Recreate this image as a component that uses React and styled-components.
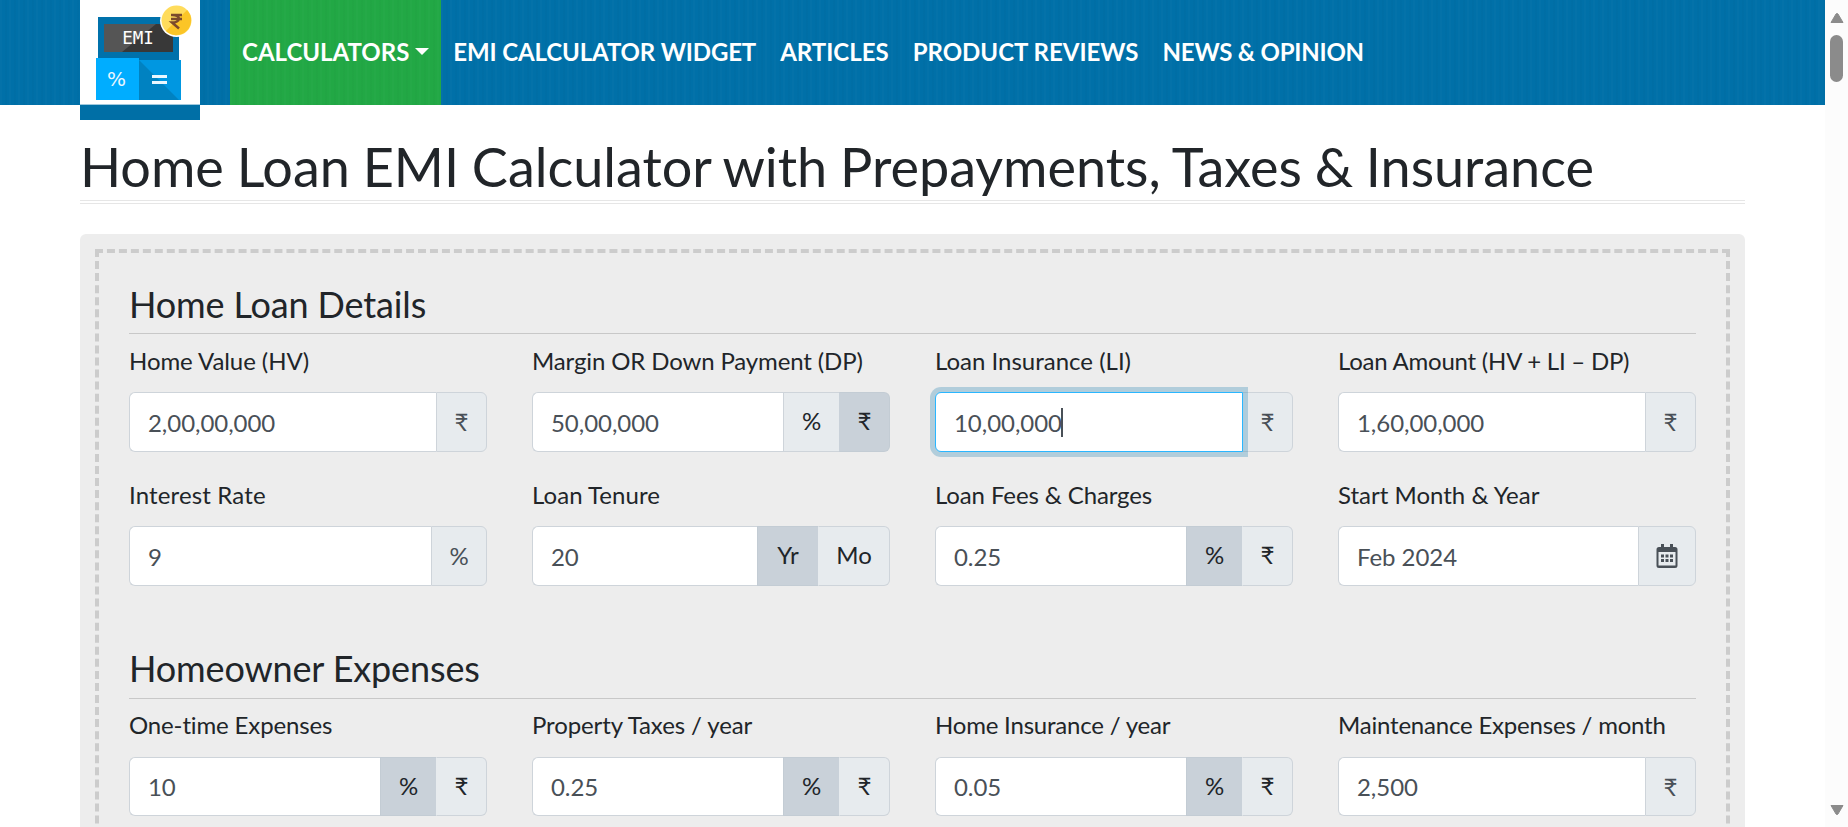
import React from "react";
import styled, { createGlobalStyle, css } from "styled-components";

const GlobalStyle = createGlobalStyle`
  *, *::before, *::after { box-sizing: border-box; }
  html, body { margin: 0; height: 100%; overflow: hidden; background: #fff; }
  body {
    font-family: Lato, "Noto Sans", sans-serif;
    font-size: 24px;
    line-height: 36px;
    font-variant-ligatures: none;
    color: #212529;
  }
`;

const weave = css`
  background-image:
    repeating-linear-gradient(90deg, rgba(255, 255, 255, 0.015) 0 2px, transparent 2px 5px, rgba(0, 0, 0, 0.015) 5px 7px, transparent 7px 9px);
`;

const Screen = styled.div`
  display: flex;
  width: 1848px;
  height: 827px;
  overflow: hidden;
`;

const Page = styled.div`
  flex: 1;
  min-width: 0;
`;

const Header = styled.header`
  display: flex;
  height: 105px;
  padding: 0 80px;
  background-color: #0070a8;
  ${weave}
`;

const Brand = styled.a`
  flex: none;
  width: 120px;
  height: 120px;
  margin-right: 30px;
  background: #fff;
  border-bottom: 15px solid #006fa6;
  svg { display: block; }
`;

const Nav = styled.nav`
  display: flex;
`;

const NavLink = styled.a`
  display: flex;
  align-items: center;
  padding: 0 12px 2px;
  font-weight: 700;
  letter-spacing: ${(p) => p.$track || 0}px;
  color: #fff;
  white-space: nowrap;
  ${(p) => p.$active && css`
    background-color: #22a845;
    ${weave}
  `}
`;

const Caret = styled.span`
  margin-left: 6px;
  border: 7px solid transparent;
  border-top-color: #fff;
  border-bottom: 0;
`;

const Content = styled.main`
  padding: 32px 80px 0;
`;

const Title = styled.h1`
  margin: 0 0 30px;
  height: 67px;
  border-bottom: 4px double #e6e6e6;
  font-size: 54px;
  line-height: 59px;
  font-weight: 400;
  letter-spacing: -0.025px;
  word-spacing: -1px;
  white-space: nowrap;
`;

const Panel = styled.section`
  padding: 15px;
  background: #ededed;
  border-radius: 6px;
`;

const Form = styled.div`
  height: 900px;
  padding: 28px 30px 0;
  border: 4px dashed #ccc;
`;

const Group = styled.div`
  margin-bottom: 60px;
`;

const GroupTitle = styled.h2`
  margin: 0 0 10px;
  height: 53px;
  border-bottom: 1px solid #c8c8c8;
  font-size: 36px;
  line-height: 46px;
  font-weight: 400;
  letter-spacing: -0.14px;
  ${Group}:last-child & { line-height: 44px; }
`;

const Grid = styled.div`
  display: grid;
  grid-template-columns: repeat(4, 358px);
  column-gap: 45px;
  row-gap: 26px;
`;

const Field = styled.div`
  height: 108px;
`;

const Label = styled.label`
  display: block;
  height: 48px;
  line-height: 34px;
  letter-spacing: ${(p) => p.$track || 0}px;
  white-space: nowrap;
  ${Group}:last-child & { line-height: 32px; }
`;

const InputGroup = styled.div`
  display: flex;
  height: 60px;
  ${Group}:last-child & { height: 59px; }
`;

const Value = styled.div`
  flex: 1;
  display: flex;
  align-items: center;
  padding: 1px 18px 0;
  background: #fff;
  border: 1px solid #ced4da;
  border-right: 0;
  border-radius: 6px 0 0 6px;
  color: #495057;
  letter-spacing: -0.05px;
  ${(p) => p.$focused && css`
    position: relative;
    z-index: 1;
    margin-right: -1px;
    border: 1px solid #29b6ff;
    box-shadow: 0 0 0 5px rgba(0, 112, 168, 0.25);
  `}
`;

const TextCursor = styled.span`
  width: 2px;
  height: 29px;
  margin: -1px 0 0 -1px;
  background: #495057;
`;

const Addon = styled.div`
  width: ${(p) => p.$w}px;
  display: flex;
  align-items: center;
  justify-content: center;
  background: ${(p) => (p.$on ? "#c9d1d9" : "#e7ebee")};
  border: 1px solid ${(p) => (p.$on ? "#c3ccd4" : "#ced4da")};
  color: ${(p) => (p.$button ? "#212529" : "#495057")};
  ${(p) => p.$button && css`padding-bottom: 2px;`}
  ${(p) => p.$inner && css`border-left-color: transparent;`}
  &:last-child { border-radius: 0 6px 6px 0; }
  &:not(:last-child) { border-right: 0; }
`;

const Scrollbar = styled.aside`
  width: 23px;
  display: flex;
  flex-direction: column;
  align-items: center;
  padding: 13px 0 12px;
  background: #fcfcfc;
`;

const Thumb = styled.div`
  width: 13px;
  height: 47px;
  margin: 12px 0 auto;
  border-radius: 7px;
  background: #8b8b8b;
`;

const Logo = () => (
  <svg width="120" height="105" viewBox="0 0 120 105">
    <rect x="18" y="17" width="81" height="44" fill="#0071ab" />
    <rect x="24" y="24" width="69" height="28" fill="#555" />
    <path d="M76 24H93V52H42Z" fill="#383838" />
    <text x="58" y="43.500" textAnchor="middle" fontFamily="DejaVu Sans Mono" fontSize="17.500" fill="#fff">EMI</text>
    <rect x="16" y="58" width="43" height="42" fill="#00adff" />
    <rect x="59" y="60" width="42" height="40" fill="#0097e1" />
    <path d="M59 60L99 100H59Z" fill="#0082c1" />
    <text x="36.500" y="86" textAnchor="middle" fontFamily="DejaVu Sans" fontSize="20" fill="#eaf7ff">%</text>
    <path d="M72 76.500H87M72 82.500H87" stroke="#eaf7ff" strokeWidth="3" />
    <circle cx="96.500" cy="20.500" r="16.500" fill="#fff" />
    <circle cx="96.500" cy="20.500" r="15" fill="#ffdc5c" />
    <path d="M107.100 9.900A15 15 0 0 1 85.900 31.100Z" fill="#fbc527" />
    <path d="M91 15H102M91 19H102M92 15Q99 15 99 19Q98 22.500 92 22.500L99 28.500" fill="none" stroke="#7b4a2c" strokeWidth="2.500" />
    <path d="M0 104.500H120" stroke="#9fc9de" strokeWidth="1" />
  </svg>
);

const CalendarIcon = () => (
  <svg width="23" height="24" viewBox="0 0 23 24" fill="#495057">
    <path d="M5 0H8V3H14V0H17V3H19Q21.500 3 21.500 5.500V21.500Q21.500 24 19 24H3Q.5 24 .5 21.500V5.500Q.5 3 3 3H5ZM2.500 8V21.500H19.500V8Z" fillRule="evenodd" />
    <path d="M5 10.500h3v3h-3zM9.500 10.500h3v3h-3zM14 10.500h3v3h-3zM5 15h3v3h-3zM9.500 15h3v3h-3zM14 15h3v3h-3z" />
  </svg>
);

const Arrow = ({ down }) => (
  <svg width="14" height="10" viewBox="0 0 14 10">
    <path d={down ? "M1 .5H13L8 9Q7 10 6 9Z" : "M1 9.500H13L8 1Q7 0 6 1Z"} fill="#8b8b8b" stroke="#8b8b8b" strokeLinejoin="round" />
  </svg>
);

const rupee = { text: "₹", w: 51 };
const percentRupee = (on) => [
  { text: "%", w: 56, button: true, on: on === "%" },
  { text: "₹", w: 51, button: true, on: on === "₹", inner: true },
];

const groups = [
  {
    title: "Home Loan Details",
    fields: [
      { label: "Home Value (HV)", track: -0.06, value: "2,00,00,000", addons: [rupee] },
      { label: "Margin OR Down Payment (DP)", track: -0.13, value: "50,00,000", addons: percentRupee("₹") },
      { label: "Loan Insurance (LI)", value: "10,00,000", addons: [rupee], focused: true },
      { label: "Loan Amount (HV + LI – DP)", track: -0.23, value: "1,60,00,000", addons: [rupee] },
      { label: "Interest Rate", track: 0.14, value: "9", addons: [{ text: "%", w: 56 }] },
      {
        label: "Loan Tenure",
        track: 0.05,
        value: "20",
        addons: [
          { text: "Yr", w: 61, button: true, on: true },
          { text: "Mo", w: 72, button: true, inner: true },
        ],
      },
      { label: "Loan Fees & Charges", track: -0.12, value: "0.25", addons: percentRupee("%") },
      { label: "Start Month & Year", value: "Feb 2024", addons: [{ text: <CalendarIcon />, w: 58 }] },
    ],
  },
  {
    title: "Homeowner Expenses",
    fields: [
      { label: "One-time Expenses", track: -0.14, value: "10", addons: percentRupee("%") },
      { label: "Property Taxes / year", track: -0.11, value: "0.25", addons: percentRupee("%") },
      { label: "Home Insurance / year", track: -0.2, value: "0.05", addons: percentRupee("%") },
      { label: "Maintenance Expenses / month", track: -0.2, value: "2,500", addons: [rupee] },
    ],
  },
];

export default function App() {
  return (
    <Screen>
      <GlobalStyle />
      <Page>
        <Header>
          <Brand><Logo /></Brand>
          <Nav>
            <NavLink $active>CALCULATORS<Caret /></NavLink>
            <NavLink $track={-0.13}>EMI CALCULATOR WIDGET</NavLink>
            <NavLink>ARTICLES</NavLink>
            <NavLink>PRODUCT REVIEWS</NavLink>
            <NavLink $track={-0.22}>NEWS &amp; OPINION</NavLink>
          </Nav>
        </Header>
        <Content>
          <Title>Home Loan EMI Calculator with Prepayments, Taxes &amp; Insurance</Title>
          <Panel>
            <Form>
              {groups.map((g) => (
                <Group key={g.title}>
                  <GroupTitle>{g.title}</GroupTitle>
                  <Grid>
                    {g.fields.map((f) => (
                      <Field key={f.label}>
                        <Label $track={f.track}>{f.label}</Label>
                        <InputGroup>
                          <Value $focused={f.focused}>
                            {f.value}
                            {f.focused && <TextCursor />}
                          </Value>
                          {f.addons.map((a, i) => (
                            <Addon key={i} $w={a.w} $button={a.button} $on={a.on} $inner={a.inner}>
                              {a.text}
                            </Addon>
                          ))}
                        </InputGroup>
                      </Field>
                    ))}
                  </Grid>
                </Group>
              ))}
            </Form>
          </Panel>
        </Content>
      </Page>
      <Scrollbar>
        <Arrow />
        <Thumb />
        <Arrow down />
      </Scrollbar>
    </Screen>
  );
}
